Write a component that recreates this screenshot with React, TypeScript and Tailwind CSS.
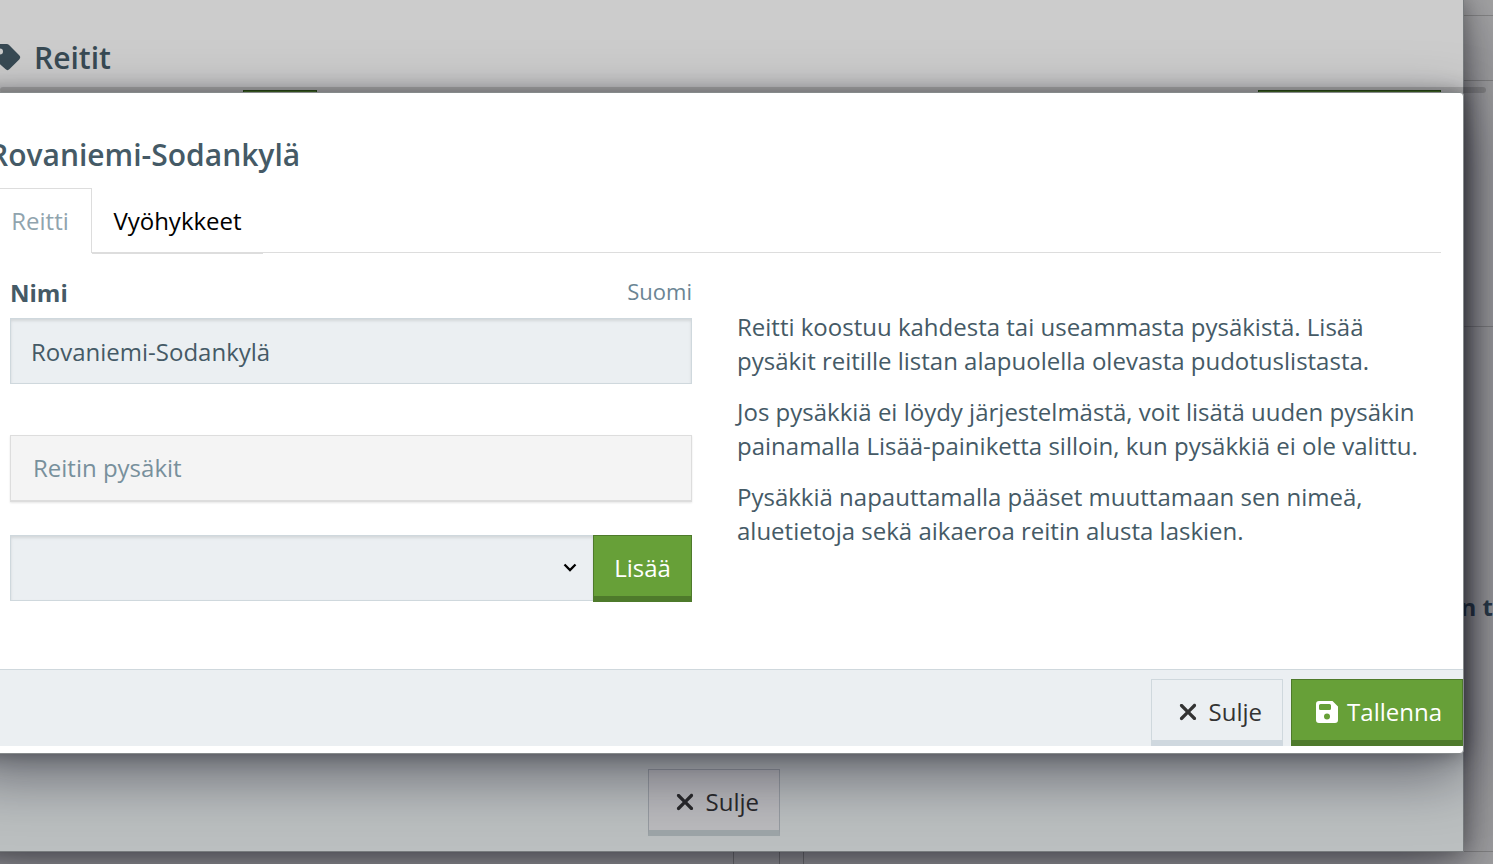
import { useState } from 'react';
import { FaXmark } from 'react-icons/fa6';

function TagIcon() {
  return (
    <svg viewBox="0 0 32 32" className="h-8 w-8" fill="currentColor" aria-hidden="true">
      <path
        fillRule="evenodd"
        d="M3 6a3 3 0 0 1 3-3h11.500a4 4 0 0 1 2.800 1.200l9.900 10a3 3 0 0 1 0 4.200l-9.600 9.700a3 3 0 0 1-4.200 0L4.200 17.300A4 4 0 0 1 3 14.500zM11 7.500a3 3 0 1 0 0 6 3 3 0 0 0 0-6z"
      />
    </svg>
  );
}

function SaveIcon() {
  return (
    <svg viewBox="0 0 22 22" className="size-[22px]" fill="currentColor" aria-hidden="true">
      <path
        fillRule="evenodd"
        d="M3 0h13.500l5.500 5.500V19a3 3 0 0 1-3 3H3a3 3 0 0 1-3-3V3a3 3 0 0 1 3-3zM4.500 3A1.500 1.500 0 0 0 3 4.500v3A1.500 1.500 0 0 0 4.500 9h9A1.500 1.500 0 0 0 15 7.500v-3A1.500 1.500 0 0 0 13.500 3zM11 12.500a3 3 0 1 0 0 6 3 3 0 0 0 0-6z"
      />
    </svg>
  );
}

function CloseButton({ dimmed = false }: { dimmed?: boolean }) {
  const colors = dimmed
    ? 'border-[#7f8790]/60 border-b-[#9da5a8] bg-[#b9b5b8]/40 text-[#29292b]'
    : 'border-[#cfd8dd] border-b-[#cfd8df] bg-[#ebeff2] text-[#333333]';

  return (
    <button
      type="button"
      className={`flex h-[67px] w-[132px] items-center justify-end gap-2 border border-b-[6px] pt-1 pr-5 text-2xl ${colors}`}
    >
      <FaXmark className="size-[26px]" />
      Sulje
    </button>
  );
}

function PageBackground() {
  return (
    <div className="flex min-h-screen flex-col bg-[#a3a3a4] text-[#2b3d4c]">
      <div className="h-4 border-b border-[#858585]" />
      <div className="h-[65px] border-b border-[#858585]" />
      <div className="h-[246px] border-b border-[#858585]" />
      <div className="flex flex-1 items-center justify-end border-b border-[#858585] pt-9 text-2xl font-bold">
        n t
      </div>
      <div className="flex h-3">
        <div className="w-[734px] border-r border-[#787878]" />
        <div className="w-[46px] border-r border-[#787878]" />
        <div className="w-6 border-r border-[#787878]" />
      </div>
    </div>
  );
}

function RoutesDialog() {
  return (
    <section
      aria-label="Reitit"
      className="absolute -left-9 -top-px right-[29px] bottom-3 flex flex-col justify-between border border-[#777b7d] bg-[#cccccc] shadow-[0_20px_60px_rgba(10,10,25,0.5),0_0_20px_rgba(0,0,0,0.35)]"
    >
      <div className="pr-[22px] pl-6">
        <h1 className="flex h-[90px] items-center gap-[13px] pt-6 text-[30px] font-semibold text-[#384a54]">
          <TagIcon />
          Reitit
        </h1>
        <div className="flex justify-between">
          <div className="ml-[254px] h-6 w-[74px] border border-[#31551a] bg-[#52802d]" />
          <div className="h-6 w-[183px] border border-[#31551a] bg-[#52802d]" />
        </div>
      </div>
      <footer className="flex justify-center bg-[#bbbfc0] pt-4 pb-[15px]">
        <CloseButton dimmed />
      </footer>
    </section>
  );
}

function RouteDialog() {
  const [name, setName] = useState('Rovaniemi-Sodankylä');

  return (
    <section
      role="dialog"
      aria-labelledby="route-title"
      className="absolute -left-9 right-[29px] top-[92px] rounded-sm border border-[#868a8b] bg-white pb-[7px] text-2xl text-[#455a66] shadow-[0_20px_60px_rgba(10,10,25,0.5),0_0_20px_rgba(0,0,0,0.35)]"
    >
      <div className="pr-[22px] pl-6">
        <h2 id="route-title" className="pt-10 pb-3 text-[30px] leading-[43px] font-semibold">
          {name}
        </h2>

        {/* Tabs */}
        <div role="tablist" className="flex">
          <button
            type="button"
            role="tab"
            aria-selected="true"
            className="h-[65px] w-[103px] border-t border-r border-[#dddddd] text-[#90a4ae]"
          >
            Reitti
          </button>
          <button
            type="button"
            role="tab"
            aria-selected="false"
            className="h-[66px] w-[171px] border-b-2 border-[#dddddd] pt-0.5 text-black"
          >
            Vyöhykkeet
          </button>
          <div className="h-[65px] flex-1 border-b border-[#dddddd]" />
        </div>

        {/* Route form */}
        <div className="grid grid-cols-2 gap-[45px] pt-[19px] pr-[22px] pb-[67px] pl-[21px]">
          <div>
            <div className="flex h-[45px] justify-between leading-[40px]">
              <label htmlFor="route-name" className="font-bold">Nimi</label>
              <span className="text-[22px] leading-9 text-[#6b8594]">Suomi</span>
            </div>
            <input
              id="route-name"
              value={name}
              onChange={(e) => setName(e.target.value)}
              className="h-[66px] w-full border border-[#cfd8dd] bg-[#ebeff2] px-5 shadow-[inset_0_2px_3px_rgba(0,0,0,0.1)]"
            />
            <div className="mt-[51px] flex h-[67px] items-center border border-b-2 border-[#dddddd] bg-[#f4f4f4] px-[22px] text-[#78909c] shadow-[0_1px_2px_rgba(0,0,0,0.1)]">
              Reitin pysäkit
            </div>
            <div className="mt-[33px] flex">
              <div className="relative flex-1">
                <select
                  aria-label="Pysäkki"
                  className="h-[66px] w-full appearance-none border border-r-0 border-[#cfd8dd] bg-[#ebeff2] px-5 shadow-[inset_0_2px_3px_rgba(0,0,0,0.1)]"
                >
                  <option value="" />
                </select>
                <svg
                  viewBox="0 0 14 9"
                  className="pointer-events-none absolute top-7 right-4 h-[9px] w-[14px] text-black"
                  fill="none"
                  stroke="currentColor"
                  strokeWidth="2.3"
                  aria-hidden="true"
                >
                  <path d="M1.500 1.500 7 7l5.500-5.500" />
                </svg>
              </div>
              <button
                type="button"
                className="h-[67px] w-[99px] border border-b-[6px] border-[#4e7a2b] bg-[#67a038] pt-1 font-medium text-white"
              >
                Lisää
              </button>
            </div>
          </div>

          <div className="space-y-[17px] pt-[37px] leading-[34px]">
            <p>
              Reitti koostuu kahdesta tai useammasta pysäkistä. Lisää pysäkit reitille listan
              alapuolella olevasta pudotuslistasta.
            </p>
            <p>
              Jos pysäkkiä ei löydy järjestelmästä, voit lisätä uuden pysäkin painamalla
              Lisää-painiketta silloin, kun pysäkkiä ei ole valittu.
            </p>
            <p>
              Pysäkkiä napauttamalla pääset muuttamaan sen nimeä, aluetietoja sekä aikaeroa reitin
              alusta laskien.
            </p>
          </div>
        </div>
      </div>

      <footer className="flex justify-end gap-2 border-t border-[#cfd8dd] bg-[#ebeff2] pt-[9px]">
        <CloseButton />
        <button
          type="button"
          className="flex h-[67px] w-[172px] items-center justify-end gap-[9px] border border-b-[6px] border-[#4e7a2b] bg-[#67a038] pt-1 pr-5 font-medium text-white"
        >
          <SaveIcon />
          Tallenna
        </button>
      </footer>
    </section>
  );
}

export default function App() {
  return (
    <main className="relative overflow-hidden font-['Open_Sans',sans-serif]">
      <PageBackground />
      <RoutesDialog />
      <div className="absolute top-[87px] right-[7px] left-0 h-1.5 rounded-sm bg-black/15" />
      <RouteDialog />
    </main>
  );
}
